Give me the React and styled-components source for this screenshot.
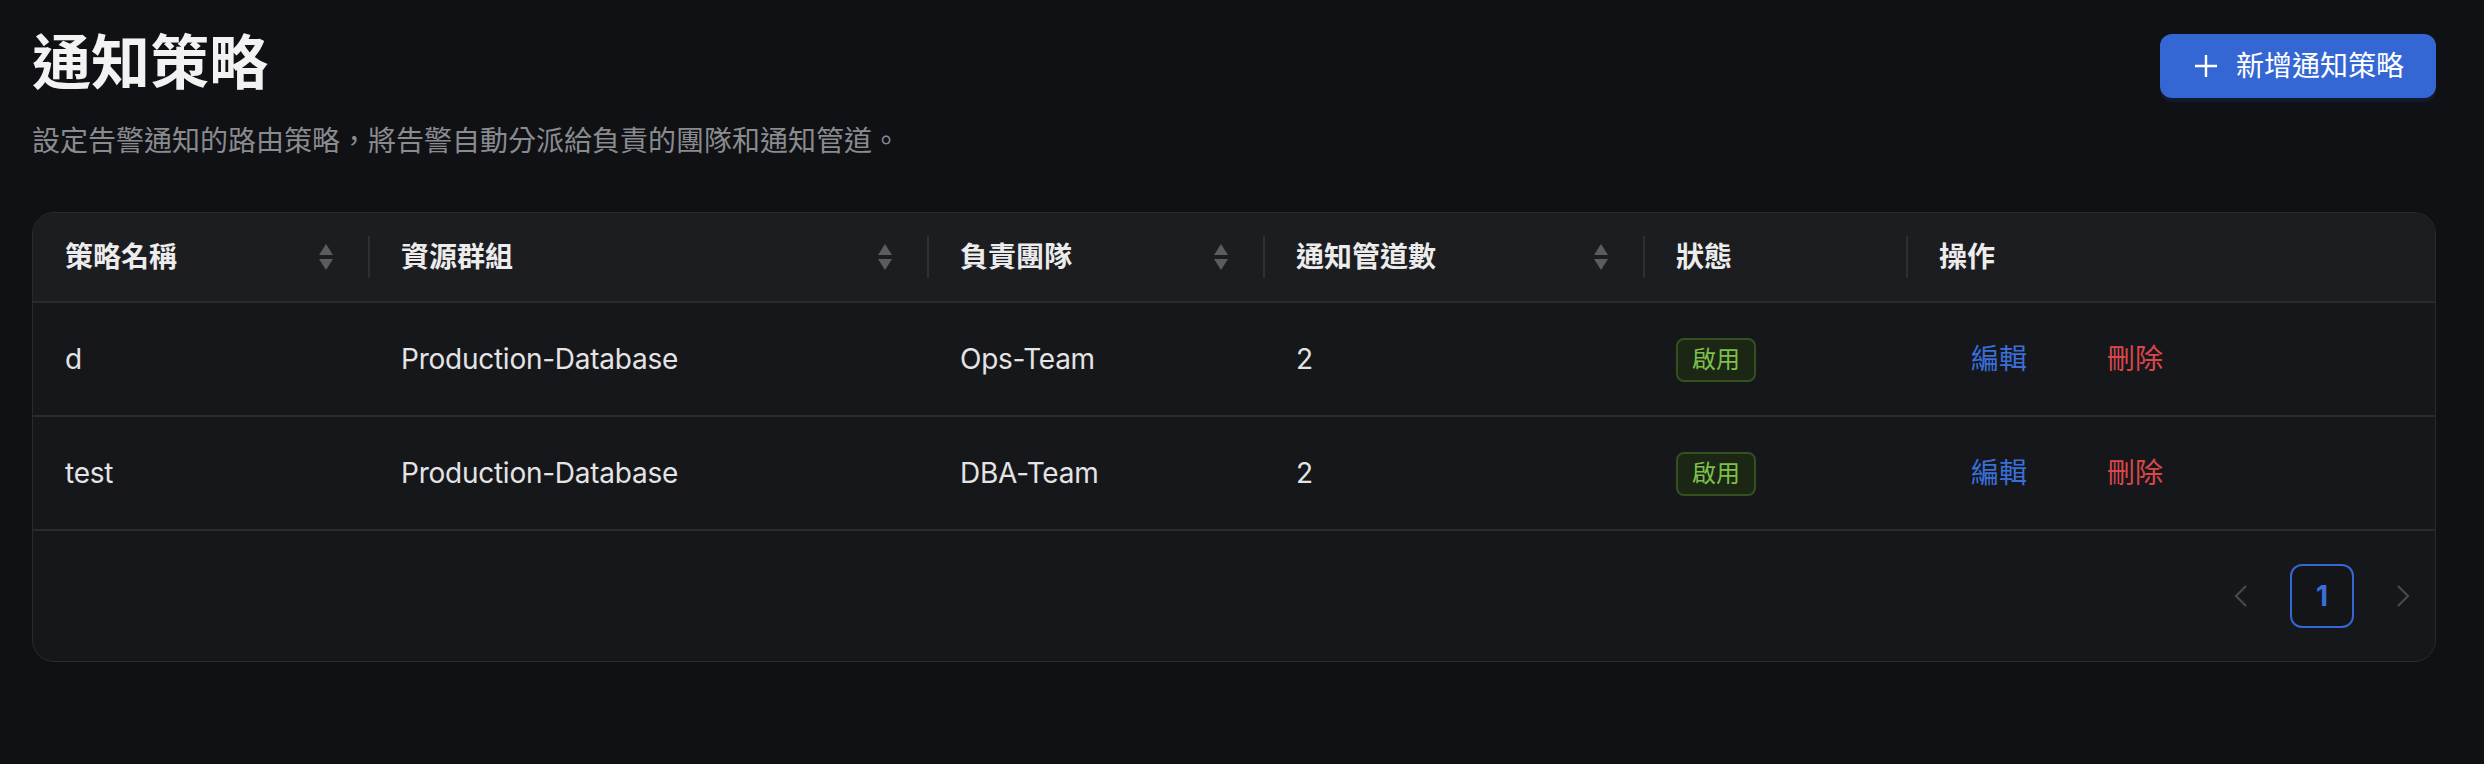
import React from "react";
import styled, { createGlobalStyle } from "styled-components";

const GlobalStyle = createGlobalStyle`
  html, body {
    margin: 0;
    padding: 0;
    background: #0f1115;
  }
  body {
    font-family: Inter, "Noto Sans CJK TC", "Noto Sans", sans-serif;
    color: rgba(255, 255, 255, 0.85);
  }
`;

const columns = [
  { key: "name", title: "策略名稱", width: 336, sortable: true },
  { key: "group", title: "資源群組", width: 559, sortable: true },
  { key: "team", title: "負責團隊", width: 336, sortable: true },
  { key: "channels", title: "通知管道數", width: 380, sortable: true },
  { key: "status", title: "狀態", width: 263 },
  { key: "actions", title: "操作", width: 528 },
];

const rows = [
  { id: 1, name: "d", group: "Production-Database", team: "Ops-Team", channels: 2 },
  { id: 2, name: "test", group: "Production-Database", team: "DBA-Team", channels: 2 },
];

export default function App() {
  return (
    <Page>
      <GlobalStyle />
      <PageHeader>
        <div>
          <Title>通知策略</Title>
          <Subtitle>設定告警通知的路由策略，將告警自動分派給負責的團隊和通知管道。</Subtitle>
        </div>
        <AddButton>
          <svg width="28" height="28" viewBox="0 0 28 28">
            <path d="M14 3v22M3 14h22" stroke="#fff" strokeWidth="2.4" fill="none" />
          </svg>
          新增通知策略
        </AddButton>
      </PageHeader>

      <Card>
        <Table>
          <colgroup>
            {columns.map((c) => (
              <col key={c.key} style={{ width: c.width }} />
            ))}
          </colgroup>
          <thead>
            <tr>
              {columns.map((c, i) => (
                <Th key={c.key} $divider={i > 0}>
                  <HeadInner>
                    {c.title}
                    {c.sortable && (
                      <Sorter>
                        <svg width="20" height="28" viewBox="0 0 20 28">
                          <path d="M10 1 L17 12 L3 12 Z" fill="#5b5c60" />
                          <path d="M3 16 L17 16 L10 27 Z" fill="#5b5c60" />
                        </svg>
                      </Sorter>
                    )}
                  </HeadInner>
                </Th>
              ))}
            </tr>
          </thead>
          <tbody>
            {rows.map((r) => (
              <tr key={r.id}>
                <Td>{r.name}</Td>
                <Td>{r.group}</Td>
                <Td>{r.team}</Td>
                <Td>{r.channels}</Td>
                <Td>
                  <StatusTag>啟用</StatusTag>
                </Td>
                <Td>
                  <Actions>
                    <LinkButton $tone="#3a6fd8">編輯</LinkButton>
                    <LinkButton $tone="#d9474b">刪除</LinkButton>
                  </Actions>
                </Td>
              </tr>
            ))}
          </tbody>
        </Table>
        <Pagination>
          <PageArrow>
            <svg width="28" height="28" viewBox="0 0 28 28">
              <path d="M18 4 L8 14 L18 24" stroke="#48494d" strokeWidth="2.2" fill="none" />
            </svg>
          </PageArrow>
          <PageItem $active>1</PageItem>
          <PageArrow>
            <svg width="28" height="28" viewBox="0 0 28 28">
              <path d="M10 4 L20 14 L10 24" stroke="#48494d" strokeWidth="2.2" fill="none" />
            </svg>
          </PageArrow>
        </Pagination>
      </Card>
    </Page>
  );
}

const Page = styled.div`
  padding: 28px 48px 40px 32px;
`;

const PageHeader = styled.div`
  display: flex;
  justify-content: space-between;
  align-items: flex-start;
  margin-bottom: 49px;
`;

const Title = styled.h1`
  margin: 0;
  font-size: 59px;
  line-height: 70px;
  font-weight: 700;
  color: #f2f2f2;
`;

const Subtitle = styled.p`
  margin: 21px 0 0;
  font-size: 28px;
  line-height: 44px;
  color: #8a8b8f;
`;

const AddButton = styled.button`
  margin-top: 6px;
  height: 64px;
  padding: 0 30px;
  display: flex;
  align-items: center;
  gap: 16px;
  border: 2px solid #3567d4;
  border-radius: 12px;
  background: #3567d4;
  color: #fff;
  font-family: inherit;
  font-size: 28px;
  line-height: 44px;
  box-shadow: 0 4px 0 rgba(30, 70, 160, 0.18);
  cursor: pointer;
`;

const Card = styled.div`
  border: 1px solid #2a2b2f;
  border-radius: 22px;
  background: #16171b;
  overflow: hidden;
`;

const Table = styled.table`
  width: 100%;
  table-layout: fixed;
  border-collapse: collapse;
  font-size: 28px;
  line-height: 44px;
`;

const Th = styled.th`
  position: relative;
  padding: 22px 32px;
  background: #1c1d21;
  color: #ececec;
  font-weight: 600;
  text-align: left;
  border-bottom: 2px solid #2a2b2f;

  &::before {
    content: "";
    display: ${(p) => (p.$divider ? "block" : "none")};
    position: absolute;
    left: -1px;
    top: 50%;
    transform: translateY(-50%);
    width: 2px;
    height: 42px;
    background: #2e2f33;
  }
`;

const HeadInner = styled.div`
  display: flex;
  align-items: center;
  justify-content: space-between;
`;

const Sorter = styled.span`
  display: flex;
  align-items: center;
  margin-right: 1px;
`;

const Td = styled.td`
  padding: 24px 32px;
  color: #e4e4e5;
  letter-spacing: -0.25px;
  border-bottom: 2px solid #2a2b2f;
  vertical-align: middle;
  white-space: nowrap;
`;

const StatusTag = styled.span`
  display: inline-block;
  padding: 0 14px;
  font-size: 24px;
  line-height: 40px;
  letter-spacing: 0;
  color: #7dbf4c;
  background: #1b2614;
  border: 2px solid #33501f;
  border-radius: 8px;
  vertical-align: middle;
`;

const Actions = styled.div`
  display: flex;
  gap: 16px;
`;

const LinkButton = styled.button`
  height: 64px;
  padding: 0 30px;
  border: 2px solid transparent;
  background: transparent;
  color: ${(p) => p.$tone};
  font-family: inherit;
  font-size: 28px;
  line-height: 44px;
  cursor: pointer;
`;

const Pagination = styled.div`
  display: flex;
  justify-content: flex-end;
  gap: 16px;
  padding: 33px 1px 33px 0;
`;

const PageArrow = styled.span`
  width: 64px;
  height: 64px;
  display: flex;
  align-items: center;
  justify-content: center;
`;

const PageItem = styled.span`
  box-sizing: border-box;
  width: 64px;
  height: 64px;
  display: flex;
  align-items: center;
  justify-content: center;
  border: 2px solid ${(p) => (p.$active ? "#3567d4" : "transparent")};
  border-radius: 12px;
  background: #141518;
  color: #3a6fd8;
  font-size: 28px;
  font-weight: 700;
`;
